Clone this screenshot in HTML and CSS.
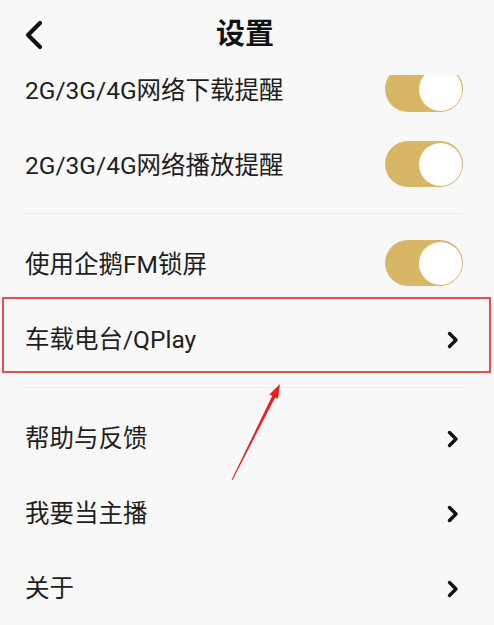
FILE: index.html
```html
<!DOCTYPE html>
<html lang="zh-CN">
<head>
<meta charset="utf-8">
<title>设置</title>
<link rel="stylesheet" href="styles.css">
</head>
<body>
<div class="screen">
  <header class="topbar">
    <span class="back">
      <svg width="20" height="30" viewBox="0 0 20 30"><path d="M16 3 L4 15 L16 27" fill="none" stroke="#111" stroke-width="4.2" stroke-linecap="round" stroke-linejoin="round"/></svg>
    </span>
    <h1 class="title">设置</h1>
    <span></span>
  </header>
  <div class="viewport">
    <div class="list">
      <div class="row"><span class="label">2G/3G/4G网络下载提醒</span><span class="toggle"><span class="knob"></span></span></div>
      <div class="row"><span class="label">2G/3G/4G网络播放提醒</span><span class="toggle"><span class="knob"></span></span></div>
      <div class="divider"></div>
      <div class="row"><span class="label">使用企鹅FM锁屏</span><span class="toggle"><span class="knob"></span></span></div>
      <div class="row"><span class="label">车载电台/QPlay</span><span class="chev"><svg width="12" height="18" viewBox="0 0 12 18"><path d="M2.5 2.5 L9 9 L2.5 15.5" fill="none" stroke="#111" stroke-width="3.4" stroke-linecap="round" stroke-linejoin="round"/></svg></span></div>
      <div class="divider"></div>
      <div class="row"><span class="label">帮助与反馈</span><span class="chev"><svg width="12" height="18" viewBox="0 0 12 18"><path d="M2.5 2.5 L9 9 L2.5 15.5" fill="none" stroke="#111" stroke-width="3.4" stroke-linecap="round" stroke-linejoin="round"/></svg></span></div>
      <div class="row"><span class="label">我要当主播</span><span class="chev"><svg width="12" height="18" viewBox="0 0 12 18"><path d="M2.5 2.5 L9 9 L2.5 15.5" fill="none" stroke="#111" stroke-width="3.4" stroke-linecap="round" stroke-linejoin="round"/></svg></span></div>
      <div class="row"><span class="label">关于</span><span class="chev"><svg width="12" height="18" viewBox="0 0 12 18"><path d="M2.5 2.5 L9 9 L2.5 15.5" fill="none" stroke="#111" stroke-width="3.4" stroke-linecap="round" stroke-linejoin="round"/></svg></span></div>
    </div>
  </div>
  <div class="highlight"></div>
  <svg class="arrow" width="494" height="625" viewBox="0 0 494 625">
    <polygon points="280,384 277.9,398.8 275.1,397.4 232.4,480.2 231.6,479.8 272.3,395.8 269.4,394.4" fill="#ee1c1c"/>
  </svg>
</div>
</body>
</html>
```

FILE: styles.css
```css
html, body {
  margin: 0;
  padding: 0;
  background: #f8f8f8;
}
body {
  font-family: Roboto, "Noto Sans CJK SC", "Noto Sans", sans-serif;
  color: #1c1c1c;
}
.screen {
  position: relative;
  width: 494px;
  height: 625px;
  overflow: hidden;
  background: #f8f8f8;
}
.topbar {
  height: 75px;
  box-sizing: border-box;
  padding-bottom: 6px;
  display: grid;
  grid-template-columns: 1fr auto 1fr;
  align-items: center;
}
.back {
  justify-self: start;
  margin-left: 24px;
  display: flex;
}
.title {
  margin: 0 4px 0 0;
  font-size: 29px;
  font-weight: 700;
  line-height: 1;
  color: #111;
}
.viewport {
  height: 550px;
  overflow: hidden;
}
.list {
  margin-top: -22px;
}
.row {
  height: 75px;
  display: flex;
  align-items: center;
  justify-content: space-between;
  padding: 0 31px 0 25px;
}
.label {
  font-size: 24.5px;
  line-height: 1.2;
  color: #1e1e1e;
}
.toggle {
  width: 78px;
  height: 46px;
  margin-top: -3px;
  border-radius: 23px;
  background: #d9b566;
  display: flex;
  align-items: center;
  justify-content: flex-end;
  padding: 0 1.5px;
  box-sizing: border-box;
}
.knob {
  width: 43px;
  height: 43px;
  border-radius: 50%;
  background: #ffffff;
}
.chev {
  display: flex;
  margin-right: 4px;
}
.divider {
  height: 1px;
  background: #ececec;
  margin: 10px 31px 13px 23px;
}
.highlight {
  position: absolute;
  left: 2px;
  top: 297px;
  width: 489px;
  height: 76px;
  box-sizing: border-box;
  border: 2px solid #e4504c;
  pointer-events: none;
}
.arrow {
  position: absolute;
  left: 0;
  top: 0;
  pointer-events: none;
}
```
